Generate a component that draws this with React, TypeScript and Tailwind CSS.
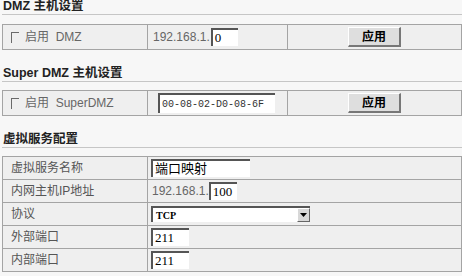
const font = "font-['Liberation_Sans','Noto_Sans_CJK_SC',sans-serif]";

function Title({ text, className }: { text: string; className?: string }) {
  return (
    <div
      className={`h-[15px] border-b border-[#c6c6c6] pl-[1px] text-[12.5px] font-bold leading-[13px] text-[#222] ${className ?? ''}`}
    >
      {text}
    </div>
  );
}

function Check({ label }: { label: string }) {
  return (
    <div className="flex items-center pl-[8px] text-[12px] text-[#666]">
      <span className="mr-[6px] h-[11px] w-[8px] border-l-[1.5px] border-t-[1.5px] border-[#6a6a6a]" />
      <span>启用&nbsp;&nbsp;{label}</span>
    </div>
  );
}

function Field({ value, w, serif = true }: { value: string; w: string; serif?: boolean }) {
  return (
    <div
      className={`${w} flex h-[18px] items-center border-l-2 border-t-2 border-[#555] bg-white pl-[2px] text-black ${
        serif ? "font-['Liberation_Serif','Noto_Sans_CJK_SC',serif] text-[13px]" : ''
      }`}
    >
      {value}
    </div>
  );
}

function Apply() {
  return (
    <div className="flex h-[20px] w-[53px] items-center justify-center border border-b-2 border-r-2 border-l-white border-t-white border-b-[#777] border-r-[#777] bg-[#dedede] text-[12px] font-semibold text-black">
      应用
    </div>
  );
}

const rows = [
  ['虚拟服务名称', 'name'],
  ['内网主机IP地址', 'ip'],
  ['协议', 'proto'],
  ['外部端口', 'ext'],
  ['内部端口', 'int'],
];

export default function App() {
  return (
    <div className={`h-[276px] w-[462px] overflow-hidden bg-[#f7f7f7] pl-[2px] ${font}`}>
      <Title text="DMZ 主机设置" />

      <div className="mt-[9px] flex h-[26px] w-[460px] border border-[#a4a4a4] bg-[#efefef]">
        <div className="flex w-[145px] items-center border-r border-[#a4a4a4]">
          <Check label="DMZ" />
        </div>
        <div className="flex w-[140px] items-center border-r border-[#a4a4a4] pl-[5px] text-[12px] text-[#666]">
          192.168.1.
          <Field value="0" w="w-[27px] ml-[1px]" />
        </div>
        <div className="flex flex-1 items-center justify-center">
          <Apply />
        </div>
      </div>

      <Title text="Super DMZ 主机设置" className="mt-[17px]" />

      <div className="mt-[8px] flex h-[26px] w-[460px] border border-[#a4a4a4] bg-[#efefef]">
        <div className="flex w-[145px] items-center border-r border-[#a4a4a4]">
          <Check label="SuperDMZ" />
        </div>
        <div className="flex w-[140px] items-center border-r border-[#a4a4a4] pl-[10px]">
          <div className="flex h-[20px] w-[117px] items-center border-l-2 border-t-2 border-[#555] bg-white pl-[2px] font-['Liberation_Mono',monospace] text-[10px] text-[#333]">
            00-08-02-D0-08-6F
          </div>
        </div>
        <div className="flex flex-1 items-center justify-center">
          <Apply />
        </div>
      </div>

      <Title text="虚拟服务配置" className="mt-[17px]" />

      <div className="mt-[8px] w-[460px] border-l border-r border-t border-[#a4a4a4] bg-[#efefef]">
        {rows.map(([label, key]) => (
          <div key={key} className="flex h-[23px] border-b border-[#a4a4a4]">
            <div className="flex w-[145px] items-center border-r border-[#a4a4a4] pl-[8px] text-[12px] text-[#555]">
              {label}
            </div>
            <div className="flex flex-1 items-center pl-[3px]">
              {key === 'name' && (
                <div className="flex h-[18px] w-[99px] items-center border-l-2 border-t-2 border-[#555] bg-white pl-[2px] text-[13px] text-black">
                  端口映射
                </div>
              )}
              {key === 'ip' && (
                <div className="flex items-center pl-[1px] text-[12px] text-[#666]">
                  192.168.1.
                  <Field value="100" w="w-[28px]" />
                </div>
              )}
              {key === 'proto' && (
                <div className="flex h-[16px] w-[159px] items-center justify-between border-l-2 border-t-2 border-[#555] bg-white">
                  <span className="pl-[3px] font-['Liberation_Serif',serif] text-[10px] font-bold text-black">TCP</span>
                  <span className="flex h-[14px] w-[13px] items-center justify-center border border-b-[#666] border-r-[#666] border-l-white border-t-white bg-[#d8d8d8]">
                    <svg width="7" height="4" viewBox="0 0 7 4">
                      <path d="M0 0h7L3.5 4z" fill="#000" />
                    </svg>
                  </span>
                </div>
              )}
              {(key === 'ext' || key === 'int') && <Field value="211" w="w-[38px]" />}
            </div>
          </div>
        ))}
      </div>
    </div>
  );
}
